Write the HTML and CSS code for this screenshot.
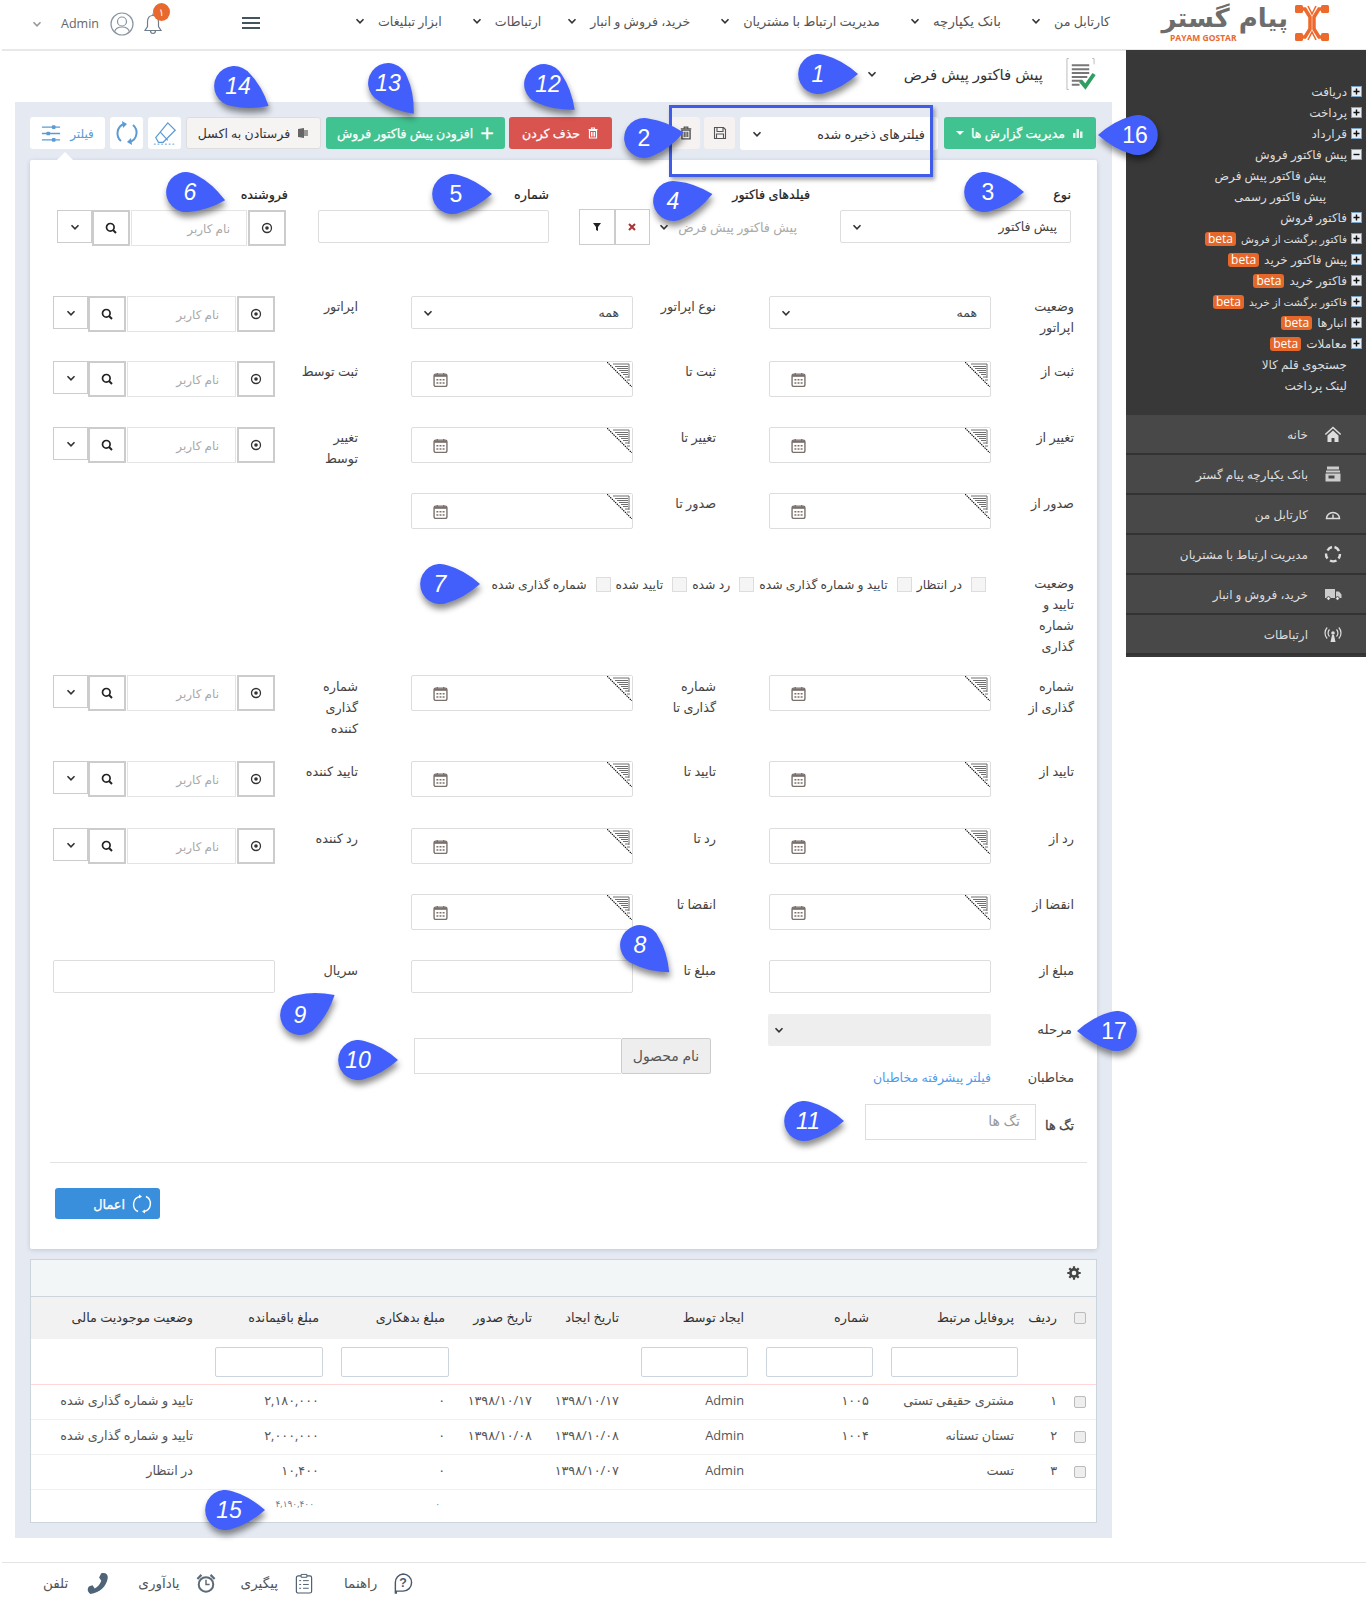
FILE: index.html
```html
<!DOCTYPE html>
<html lang="fa" dir="rtl">
<head>
    <meta charset="UTF-8">
    <meta name="viewport" content="width=device-width, initial-scale=1.0">
    <title>پیش فاکتور پیش فرض</title>
    <link rel="stylesheet" href="styles.css">
</head>
<body>
    <!-- icons used more than once -->
    <svg class="icon-defs" width="0" height="0">
        <defs>
            <symbol id="i-chev" viewBox="0 0 12 12"><path d="M2.5 4.2 6 7.8l3.5-3.6" fill="none" stroke="currentColor" stroke-width="1.6"/></symbol>
            <symbol id="i-target" viewBox="0 0 12 12"><circle cx="6" cy="6" r="4.5" fill="none" stroke="#333" stroke-width="1.3"/><circle cx="6" cy="6" r="1.8" fill="#333"/></symbol>
            <symbol id="i-search" viewBox="0 0 12 12"><circle cx="5.3" cy="5.3" r="3.8" fill="none" stroke="#222" stroke-width="1.7"/><path d="M8 8l3 3" stroke="#222" stroke-width="2"/></symbol>
            <symbol id="i-cal" viewBox="0 0 14 14"><rect x="1" y="2" width="12" height="11.5" rx="1.5" fill="#fff" stroke="#7a706c" stroke-width="1.3"/><path d="M1 2.5h12v2H1z" fill="#7a706c"/><path d="M4 1v2M10 1v2" stroke="#7a706c" stroke-width="1.2"/><path d="M3.2 6.5h1.8V8H3.2zM6.1 6.5h1.8V8H6.1zM9 6.5h1.8V8H9zM3.2 9.5h1.8V11H3.2zM6.1 9.5h1.8V11H6.1zM9 9.5h1.8V11H9z" fill="#7a706c"/></symbol>
            <symbol id="i-corner" viewBox="0 0 25 25"><path d="M0 0h25v25z" fill="#fff"/><path d="M6 2h16v14M8 4.5h13M10 6.5h11M12 8.5h9M14 10.5h7M16 12.5h5M18 15h4M20 18h3" fill="none" stroke="#6f6f6f" stroke-width="1"/><path d="M0 0l25 25" stroke="#111" stroke-width="1.1" stroke-dasharray="1.5 .8"/></symbol>
            <symbol id="i-plus" viewBox="0 0 11 11"><rect x=".5" y=".5" width="10" height="10" fill="#e8eef4" stroke="#7ba3c6"/><path d="M2.5 5.5h6M5.5 2.5v6" stroke="#111" stroke-width="1.4"/></symbol>
            <symbol id="i-minus" viewBox="0 0 11 11"><rect x=".5" y=".5" width="10" height="10" fill="#e8eef4" stroke="#7ba3c6"/><path d="M2.5 5.5h6" stroke="#111" stroke-width="1.4"/></symbol>
            <symbol id="i-trash" viewBox="0 0 12 12"><path d="M1.5 2.5h9M4.5 2.5V1h3v1.5" fill="none" stroke="currentColor" stroke-width="1.1"/><path d="M2.5 3.5h7V11h-7z" fill="none" stroke="currentColor" stroke-width="1.2"/><path d="M4.5 5v4.5M6 5v4.5M7.5 5v4.5" stroke="currentColor"/></symbol>
            <symbol id="i-drop" viewBox="-50 -50 100 100" overflow="visible"><path d="M40 0Q24 14 8 18.4A20 20 0 1 1 8-18.4Q24-14 40 0Z"/></symbol>
        </defs>
    </svg>

    <header class="topbar">
        <div class="logo">
            <svg class="logo-mark" viewBox="0 0 34 36">
                <g fill="#ee6a2c"><rect x="0" y="0" width="8" height="8" rx="1.5"/><rect x="26" y="0" width="8" height="8" rx="1.5"/><rect x="0" y="28" width="8" height="8" rx="1.5"/><rect x="26" y="28" width="8" height="8" rx="1.5"/></g>
                <g fill="none" stroke="#ee6a2c" stroke-width="3.5"><path d="M6 4h4l5 8v12l-5 8H6M28 4h-4l-5 8v12l5 8h4"/></g>
                <g fill="none" stroke="#ee6a2c" stroke-width="1.6"><path d="M13 1l4 8 4-8M13 35l4-8 4 8"/></g>
            </svg>
            <div class="logo-text">
                <span class="logo-fa">پیام گستر</span>
                <span class="logo-en">PAYAM GOSTAR</span>
            </div>
        </div>
        <nav class="topnav">
            <a>کارتابل من<svg class="chev-s"><use href="#i-chev"/></svg></a>
            <a>بانک یکپارچه<svg class="chev-s"><use href="#i-chev"/></svg></a>
            <a>مدیریت ارتباط با مشتریان<svg class="chev-s"><use href="#i-chev"/></svg></a>
            <a>خرید، فروش و انبار<svg class="chev-s"><use href="#i-chev"/></svg></a>
            <a>ارتباطات<svg class="chev-s"><use href="#i-chev"/></svg></a>
            <a>ابزار تبلیغات<svg class="chev-s"><use href="#i-chev"/></svg></a>
        </nav>
        <div class="hamburger"><span></span><span></span><span></span></div>
        <div class="user-area">
            <div class="bell">
                <svg width="22" height="24" viewBox="0 0 22 24"><path d="M11 3.5c-3.7 0-5.5 3-5.5 6.5v4.5L3 18.5h16L16.5 14.5V10c0-3.5-1.8-6.5-5.5-6.5zM11 1.5v2M8.5 18.5c0 2 1 3 2.5 3s2.5-1 2.5-3" fill="none" stroke="#6f7c8a" stroke-width="1.2"/></svg>
                <span class="bell-badge">۱</span>
            </div>
            <svg class="user-pic" viewBox="0 0 24 24"><circle cx="12" cy="12" r="11" fill="none" stroke="#8894a1" stroke-width="1.2"/><circle cx="12" cy="9.5" r="4.5" fill="none" stroke="#8894a1" stroke-width="1.2"/><path d="M4.5 20c1-4 4-5 7.5-5s6.5 1 7.5 5" fill="none" stroke="#8894a1" stroke-width="1.2"/></svg>
            <span class="user-name">Admin</span>
            <svg class="user-chev"><use href="#i-chev"/></svg>
        </div>
    </header>

    <div class="main">
        <aside class="sidebar">
            <ul class="tree">
                <li><svg class="exp"><use href="#i-plus"/></svg>دریافت</li>
                <li><svg class="exp"><use href="#i-plus"/></svg>پرداخت</li>
                <li><svg class="exp"><use href="#i-plus"/></svg>قرارداد</li>
                <li><svg class="exp"><use href="#i-minus"/></svg>پیش فاکتور فروش</li>
                <li class="sub">پیش فاکتور پیش فرض</li>
                <li class="sub">پیش فاکتور رسمی</li>
                <li><svg class="exp"><use href="#i-plus"/></svg>فاکتور فروش</li>
                <li class="tight"><svg class="exp"><use href="#i-plus"/></svg>فاکتور برگشت از فروش<span class="beta">beta</span></li>
                <li><svg class="exp"><use href="#i-plus"/></svg>پیش فاکتور خرید<span class="beta">beta</span></li>
                <li><svg class="exp"><use href="#i-plus"/></svg>فاکتور خرید<span class="beta">beta</span></li>
                <li class="tight"><svg class="exp"><use href="#i-plus"/></svg>فاکتور برگشت از خرید<span class="beta">beta</span></li>
                <li><svg class="exp"><use href="#i-plus"/></svg>انبارها<span class="beta">beta</span></li>
                <li><svg class="exp"><use href="#i-plus"/></svg>معاملات<span class="beta">beta</span></li>
                <li class="plain">جستجوی قلم کالا</li>
                <li class="plain">لینک پرداخت</li>
            </ul>
            <ul class="side-menu">
                <li><svg viewBox="0 0 18 18"><path d="M9 1.5 .8 9l1 1L9 3.5l7.2 6.5 1-1zM3.5 10.5 9 5.5l5.5 5V17h-4v-4h-3v4h-4z" fill="#ddd"/></svg>خانه</li>
                <li><svg viewBox="0 0 18 18"><path d="M3 1.5h12v3H3zM2 5.5h14v2H2z" fill="#ccc"/><path d="M1.5 8.5h15v8h-15z" fill="#ccc"/><path d="M4.5 10.5h6v3h-6z" fill="#484848"/></svg>بانک یکپارچه پیام گستر</li>
                <li><svg viewBox="0 0 18 18"><path d="M2.5 13.5a6.5 6 0 1 1 13 0z" fill="none" stroke="#ddd" stroke-width="1.5"/><path d="M9 13V9.5" stroke="#ddd" stroke-width="1.5"/></svg>کارتابل من</li>
                <li><svg viewBox="0 0 18 18"><g fill="none" stroke="#ddd" stroke-width="2.4"><path d="M3.5 5.5A7 7 0 0 1 8 2"/><path d="M10.5 2a7 7 0 0 1 4.5 4"/><path d="M16 9a7 7 0 0 1-1.5 4.5"/><path d="M12.5 15.5a7 7 0 0 1-6.5 0"/><path d="M3.5 13.5A7 7 0 0 1 2 8.5"/></g></svg>مدیریت ارتباط با مشتریان</li>
                <li><svg viewBox="0 0 18 18"><path d="M1 4h10v9H1zM12 6.5h3l2.5 3v3.500H12z" fill="#ccc"/><circle cx="4.5" cy="13.5" r="1.8" fill="#eee" stroke="#484848"/><circle cx="13.5" cy="13.5" r="1.8" fill="#eee" stroke="#484848"/></svg>خرید، فروش و انبار</li>
                <li><svg viewBox="0 0 18 18"><circle cx="9" cy="8" r="1.8" fill="#ddd"/><path d="M8 10h2l1.5 7h-5z" fill="#ddd"/><g fill="none" stroke="#ddd" stroke-width="1.2"><path d="M5.5 11.5a5 5 0 0 1 0-7M12.5 4.5a5 5 0 0 1 0 7M3.2 13.5a8 8 0 0 1 0-11M14.8 2.5a8 8 0 0 1 0 11"/></g></svg>ارتباطات</li>
            </ul>
        </aside>

        <section class="content">
            <div class="page-title">
                <svg class="doc-icon" viewBox="0 0 32 34"><path d="M4 1H2v32h2M28 1h2v6" fill="none" stroke="#bbb"/><path d="M7 8h18M7 12h18M7 16h18M7 20h16M7 24h10M7 28h8" stroke="#777" stroke-width="2"/><path d="M16 24l5 6 9-13" fill="none" stroke="#2e9e62" stroke-width="4"/></svg>
                <h1>پیش فاکتور پیش فرض</h1>
                <svg class="title-chev"><use href="#i-chev"/></svg>
            </div>

            <div class="panel">
                <div class="toolbar">
                    <button class="btn btn-green btn-report">
                        <svg class="btn-ico" viewBox="0 0 12 12"><path d="M1 6h2.5v5H1zM4.5 2H7v9H4.5zM8 4.5h2.5V11H8z" fill="currentColor" opacity=".85"/></svg>مدیریت گزارش ها
                        <span class="caret"></span>
                    </button>
                    <div class="saved-filters">فیلترهای ذخیره شده<svg class="chev-s"><use href="#i-chev"/></svg></div>
                    <button class="btn-square btn-save"><svg viewBox="0 0 14 14"><path d="M1.5 1.5h9l2 2v9h-11z M4 1.5v4h6v-4 M3.5 12.5V8h7v4.5" fill="none" stroke="#555" stroke-width="1.1"/></svg></button>
                    <button class="btn-square btn-bin"><svg><use href="#i-trash"/></svg></button>
                    <button class="btn btn-red"><svg class="btn-ico"><use href="#i-trash"/></svg>حذف کردن</button>
                    <button class="btn btn-green btn-add"><span class="plus">+</span>افزودن پیش فاکتور فروش</button>
                    <button class="btn btn-excel"><svg class="btn-ico" viewBox="0 0 12 12"><path d="M1 2l6-1v10l-6-1z" fill="#666"/><path d="M7 3h4v6H7z" fill="#999"/></svg>فرستادن به اکسل</button>
                    <button class="tool-tab tool-eraser"><svg viewBox="0 0 28 28"><path d="M4 19 17 3l8 8-13 13H7z M9 13l8 9" fill="none" stroke="#5b9bd5" stroke-width="1.3"/><path d="M2 26h24" stroke="#5b9bd5" stroke-dasharray="2 2"/></svg></button>
                    <button class="tool-tab tool-refresh"><svg viewBox="0 0 26 26"><g fill="none" stroke="#5b9bd5" stroke-width="2"><path d="M7 21A10 10 0 0 1 10 4"/><path d="M19 5a10 10 0 0 1-3 17"/></g><path d="M8 1l5 3-4 4zM18 25l-5-3 4-4z" fill="#5b9bd5"/></svg></button>
                    <button class="tool-tab tool-filter">
                        <svg viewBox="0 0 22 20"><g stroke="#5b9bd5" stroke-width="1.6"><path d="M1 3h20M1 10h20M1 17h20"/></g><g fill="#5b9bd5"><rect x="12" y="1" width="4" height="4" rx="1"/><rect x="6" y="8" width="4" height="4" rx="1"/><rect x="12" y="15" width="4" height="4" rx="1"/></g></svg>
                        فیلتر
                    </button>
                </div>

                <div class="filter-card">
                    <div class="top-fields">
                        <div class="top-field">
                            <label>نوع</label>
                            <div class="select-box"><span>پیش فاکتور</span><svg class="chev-s"><use href="#i-chev"/></svg></div>
                        </div>
                        <div class="top-field">
                            <label>فیلدهای فاکتور</label>
                            <div class="invoice-fields">
                                <span class="muted-value">پیش فاکتور پیش فرض</span>
                                <svg class="chev-s"><use href="#i-chev"/></svg>
                                <div class="field-btns">
                                    <button><svg viewBox="0 0 10 10"><path d="M2 2l6 6M8 2 2 8" stroke="#a33" stroke-width="2"/></svg></button>
                                    <button><svg viewBox="0 0 10 10"><path d="M1 1h8L6 5v4L4 8V5z" fill="#222"/></svg></button>
                                </div>
                            </div>
                        </div>
                        <div class="top-field">
                            <label>شماره</label>
                            <div class="text-box"></div>
                        </div>
                        <div class="top-field">
                            <label>فروشنده</label>
                            <div class="user-pick user-pick-wide">
                                <span class="pick-target"><svg><use href="#i-target"/></svg></span>
                                <span class="pick-name">نام کاربر</span>
                                <span class="pick-search"><svg><use href="#i-search"/></svg></span>
                                <span class="pick-chev"><svg><use href="#i-chev"/></svg></span>
                            </div>
                        </div>
                    </div>

                    <div class="filter-row row-operator">
                        <div class="field"><label>وضعیت<br>اپراتور</label><div class="select-box"><span>همه</span><svg class="chev-s"><use href="#i-chev"/></svg></div></div>
                        <div class="field"><label>نوع اپراتور</label><div class="select-box"><span>همه</span><svg class="chev-s"><use href="#i-chev"/></svg></div></div>
                        <div class="field"><label>اپراتور</label><div class="user-pick"><span class="pick-target"><svg><use href="#i-target"/></svg></span><span class="pick-name">نام کاربر</span><span class="pick-search"><svg><use href="#i-search"/></svg></span><span class="pick-chev"><svg><use href="#i-chev"/></svg></span></div></div>
                    </div>
                    <div class="filter-row">
                        <div class="field"><label>ثبت از</label><div class="date-box"><svg class="corner"><use href="#i-corner"/></svg><svg class="cal"><use href="#i-cal"/></svg></div></div>
                        <div class="field"><label>ثبت تا</label><div class="date-box"><svg class="corner"><use href="#i-corner"/></svg><svg class="cal"><use href="#i-cal"/></svg></div></div>
                        <div class="field"><label>ثبت توسط</label><div class="user-pick"><span class="pick-target"><svg><use href="#i-target"/></svg></span><span class="pick-name">نام کاربر</span><span class="pick-search"><svg><use href="#i-search"/></svg></span><span class="pick-chev"><svg><use href="#i-chev"/></svg></span></div></div>
                    </div>
                    <div class="filter-row">
                        <div class="field"><label>تغییر از</label><div class="date-box"><svg class="corner"><use href="#i-corner"/></svg><svg class="cal"><use href="#i-cal"/></svg></div></div>
                        <div class="field"><label>تغییر تا</label><div class="date-box"><svg class="corner"><use href="#i-corner"/></svg><svg class="cal"><use href="#i-cal"/></svg></div></div>
                        <div class="field"><label>تغییر<br>توسط</label><div class="user-pick"><span class="pick-target"><svg><use href="#i-target"/></svg></span><span class="pick-name">نام کاربر</span><span class="pick-search"><svg><use href="#i-search"/></svg></span><span class="pick-chev"><svg><use href="#i-chev"/></svg></span></div></div>
                    </div>
                    <div class="filter-row row-issue">
                        <div class="field"><label>صدور از</label><div class="date-box"><svg class="corner"><use href="#i-corner"/></svg><svg class="cal"><use href="#i-cal"/></svg></div></div>
                        <div class="field"><label>صدور تا</label><div class="date-box"><svg class="corner"><use href="#i-corner"/></svg><svg class="cal"><use href="#i-cal"/></svg></div></div>
                    </div>
                    <div class="status-row">
                        <label>وضعیت<br>تایید و<br>شماره<br>گذاری</label>
                        <div class="status-checks">
                            <span class="check"><i></i>در انتظار</span>
                            <span class="check"><i></i>تایید و شماره گذاری شده</span>
                            <span class="check"><i></i>رد شده</span>
                            <span class="check"><i></i>تایید شده</span>
                            <span class="check"><i></i>شماره گذاری شده</span>
                        </div>
                    </div>
                    <div class="filter-row row-number">
                        <div class="field"><label>شماره<br>گذاری از</label><div class="date-box"><svg class="corner"><use href="#i-corner"/></svg><svg class="cal"><use href="#i-cal"/></svg></div></div>
                        <div class="field"><label>شماره<br>گذاری تا</label><div class="date-box"><svg class="corner"><use href="#i-corner"/></svg><svg class="cal"><use href="#i-cal"/></svg></div></div>
                        <div class="field"><label>شماره<br>گذاری<br>کننده</label><div class="user-pick"><span class="pick-target"><svg><use href="#i-target"/></svg></span><span class="pick-name">نام کاربر</span><span class="pick-search"><svg><use href="#i-search"/></svg></span><span class="pick-chev"><svg><use href="#i-chev"/></svg></span></div></div>
                    </div>
                    <div class="filter-row row-approve">
                        <div class="field"><label>تایید از</label><div class="date-box"><svg class="corner"><use href="#i-corner"/></svg><svg class="cal"><use href="#i-cal"/></svg></div></div>
                        <div class="field"><label>تایید تا</label><div class="date-box"><svg class="corner"><use href="#i-corner"/></svg><svg class="cal"><use href="#i-cal"/></svg></div></div>
                        <div class="field"><label>تایید کننده</label><div class="user-pick"><span class="pick-target"><svg><use href="#i-target"/></svg></span><span class="pick-name">نام کاربر</span><span class="pick-search"><svg><use href="#i-search"/></svg></span><span class="pick-chev"><svg><use href="#i-chev"/></svg></span></div></div>
                    </div>
                    <div class="filter-row">
                        <div class="field"><label>رد از</label><div class="date-box"><svg class="corner"><use href="#i-corner"/></svg><svg class="cal"><use href="#i-cal"/></svg></div></div>
                        <div class="field"><label>رد تا</label><div class="date-box"><svg class="corner"><use href="#i-corner"/></svg><svg class="cal"><use href="#i-cal"/></svg></div></div>
                        <div class="field"><label>رد کننده</label><div class="user-pick"><span class="pick-target"><svg><use href="#i-target"/></svg></span><span class="pick-name">نام کاربر</span><span class="pick-search"><svg><use href="#i-search"/></svg></span><span class="pick-chev"><svg><use href="#i-chev"/></svg></span></div></div>
                    </div>
                    <div class="filter-row">
                        <div class="field"><label>انقضا از</label><div class="date-box"><svg class="corner"><use href="#i-corner"/></svg><svg class="cal"><use href="#i-cal"/></svg></div></div>
                        <div class="field"><label>انقضا تا</label><div class="date-box"><svg class="corner"><use href="#i-corner"/></svg><svg class="cal"><use href="#i-cal"/></svg></div></div>
                    </div>
                    <div class="filter-row row-amount">
                        <div class="field"><label>مبلغ از</label><div class="text-box"></div></div>
                        <div class="field"><label>مبلغ تا</label><div class="text-box"></div></div>
                        <div class="field"><label>سریال</label><div class="text-box"></div></div>
                    </div>

                    <div class="filter-split">
                        <div class="split-main">
                            <div class="field field-stage"><label>مرحله</label><div class="stage-box"><svg class="chev-s"><use href="#i-chev"/></svg></div></div>
                            <div class="field field-audience"><label>مخاطبان</label><a class="link">فیلتر پیشرفته مخاطبان</a></div>
                            <div class="field-tags"><label>تگ ها</label><div class="tags-box">تگ ها</div></div>
                        </div>
                        <div class="product-group"><span class="addon">نام محصول</span><div class="product-input"></div></div>
                    </div>

                    <hr class="divider">
                    <div class="apply-row">
                        <button class="btn-apply">
                            <svg viewBox="0 0 20 20"><g fill="none" stroke="#fff" stroke-width="1.4"><path d="M6 17.5A8 8 0 0 1 8 2.5"/><path d="M14 2.5A8 8 0 0 1 12 17.5"/></g><path d="M7 .5l3 2-3 2zM13 19.5l-3-2 3-2z" fill="#fff"/></svg>
                            اعمال
                        </button>
                    </div>
                </div>

                <div class="grid-box">
                    <div class="grid-tools">
                        <svg viewBox="0 0 14 14"><circle cx="7" cy="7" r="3.6" fill="none" stroke="#444" stroke-width="2.6"/><path d="M7 .3v2.5M7 11.2v2.5M.3 7h2.5M11.2 7h2.5M2.3 2.3l1.8 1.8M9.9 9.9l1.8 1.8M2.3 11.7l1.8-1.8M9.9 4.1l1.8-1.8" stroke="#444" stroke-width="2.2"/></svg>
                    </div>
                    <table class="grid">
                        <colgroup>
                            <col class="c-check"><col class="c-row"><col class="c-profile"><col class="c-num"><col class="c-by"><col class="c-date"><col class="c-date"><col class="c-money"><col class="c-money"><col class="c-status">
                        </colgroup>
                        <thead>
                            <tr class="head">
                                <th><i class="box"></i></th><th>ردیف</th><th>پروفایل مرتبط</th><th>شماره</th><th>ایجاد توسط</th><th>تاریخ ایجاد</th><th>تاریخ صدور</th><th>مبلغ بدهکاری</th><th>مبلغ باقیمانده</th><th>وضعیت موجودیت مالی</th>
                            </tr>
                            <tr class="filters">
                                <td></td><td></td><td><div class="col-input"></div></td><td><div class="col-input"></div></td><td><div class="col-input"></div></td><td></td><td></td><td><div class="col-input"></div></td><td><div class="col-input"></div></td><td></td>
                            </tr>
                        </thead>
                        <tbody>
                            <tr><td><i class="box"></i></td><td>۱</td><td>مشتری حقیقی تستی</td><td>۱۰۰۵</td><td>Admin</td><td>۱۳۹۸/۱۰/۱۷</td><td>۱۳۹۸/۱۰/۱۷</td><td>۰</td><td>۲,۱۸۰,۰۰۰</td><td>تایید و شماره گذاری شده</td></tr>
                            <tr><td><i class="box"></i></td><td>۲</td><td>تستان تستانه</td><td>۱۰۰۴</td><td>Admin</td><td>۱۳۹۸/۱۰/۰۸</td><td>۱۳۹۸/۱۰/۰۸</td><td>۰</td><td>۲,۰۰۰,۰۰۰</td><td>تایید و شماره گذاری شده</td></tr>
                            <tr><td><i class="box"></i></td><td>۳</td><td>تست</td><td></td><td>Admin</td><td>۱۳۹۸/۱۰/۰۷</td><td></td><td>۰</td><td>۱۰,۴۰۰</td><td>در انتظار</td></tr>
                            <tr class="total"><td></td><td></td><td></td><td></td><td></td><td></td><td></td><td>۰</td><td>۴,۱۹۰,۴۰۰</td><td></td></tr>
                        </tbody>
                    </table>
                </div>
            </div>
        </section>
    </div>

    <footer class="bottombar">
        <a><svg viewBox="0 0 20 22"><path d="M10 1a9 9 0 0 1 0 18H3v2H2V10a9 9 0 0 1 8-9z" fill="none" stroke="#4a5a6c" stroke-width="1.5"/><text class="help-q" x="10" y="15" text-anchor="middle">?</text></svg>راهنما</a>
        <a><svg viewBox="0 0 18 22"><rect x="1" y="3" width="16" height="18" rx="2" fill="none" stroke="#4a5a6c" stroke-width="1.2"/><path d="M6 1.5h6v3H6z" fill="#fff" stroke="#4a5a6c"/><path d="M4 8h2M8 8h6M4 12h2M8 12h6M4 16h2M8 16h6" stroke="#4a5a6c"/></svg>پیگیری</a>
        <a class="foot-alarm"><svg viewBox="0 0 22 22"><circle cx="11" cy="12" r="8" fill="none" stroke="#5d6b79" stroke-width="2.2"/><path d="M11 7v5h4" fill="none" stroke="#5d6b79" stroke-width="1.6"/><path d="M1.5 6 6 1.5M20.5 6 16 1.5" stroke="#5d6b79" stroke-width="2.4"/></svg>یادآوری</a>
        <a class="foot-phone"><svg viewBox="0 0 22 22"><path d="M4 21c-3-2-3-5-1-7l3-1 2 3c3-1.5 5-4 6-7l-2-3 2-4c4-1 6 1 6 4-1 8-7 14-16 15z" fill="#4f6478"/></svg>تلفن</a>
    </footer>

    <!-- numbered callouts laid over the screenshot -->
    <div class="highlight-box"></div>
    <div class="callout at-1 slant"><svg><use href="#i-drop"/></svg><span>1</span></div>
    <div class="callout at-2"><svg><g transform="rotate(-8 50 50)"><use href="#i-drop" width="100" height="100"/></g></svg><span>2</span></div>
    <div class="callout at-3 nudge"><svg><use href="#i-drop"/></svg><span>3</span></div>
    <div class="callout at-4 slant"><svg><g transform="rotate(-10 50 50)"><use href="#i-drop" width="100" height="100"/></g></svg><span>4</span></div>
    <div class="callout at-5 nudge"><svg><use href="#i-drop"/></svg><span>5</span></div>
    <div class="callout at-6 slant nudge"><svg><g transform="rotate(12 50 50)"><use href="#i-drop" width="100" height="100"/></g></svg><span>6</span></div>
    <div class="callout at-7 slant"><svg><use href="#i-drop"/></svg><span>7</span></div>
    <div class="callout at-8 slant"><svg><g transform="rotate(43 50 50)"><use href="#i-drop" width="100" height="100"/></g></svg><span>8</span></div>
    <div class="callout at-9 slant"><svg><g transform="rotate(-30 50 50)"><use href="#i-drop" width="100" height="100"/></g></svg><span>9</span></div>
    <div class="callout at-10 slant"><svg><use href="#i-drop"/></svg><span>10</span></div>
    <div class="callout at-11 slant nudge"><svg><use href="#i-drop"/></svg><span>11</span></div>
    <div class="callout at-12 slant nudge"><svg><g transform="rotate(40 50 50)"><use href="#i-drop" width="100" height="100"/></g></svg><span>12</span></div>
    <div class="callout at-13 slant"><svg><g transform="rotate(50 50 50)"><use href="#i-drop" width="100" height="100"/></g></svg><span>13</span></div>
    <div class="callout at-14 slant nudge"><svg><g transform="rotate(30 50 50)"><use href="#i-drop" width="100" height="100"/></g></svg><span>14</span></div>
    <div class="callout at-15 slant nudge"><svg><use href="#i-drop"/></svg><span>15</span></div>
    <div class="callout at-16 nudge-back"><svg><g transform="rotate(180 50 50)"><use href="#i-drop" width="100" height="100"/></g></svg><span>16</span></div>
    <div class="callout at-17 nudge-back"><svg><g transform="rotate(180 50 50)"><use href="#i-drop" width="100" height="100"/></g></svg><span>17</span></div>
</body>
</html>
```

FILE: styles.css
```css
* {
    box-sizing: border-box;
}
body {
    margin: 0;
    position: relative;
    width: 1366px;
    height: 1603px;
    overflow: hidden;
    background: #fff;
    color: #444;
    font-family: "Open Sans", "DejaVu Sans", sans-serif;
    font-size: 12.8px;
}
button {
    font-family: inherit;
    font-size: inherit;
    cursor: pointer;
}
.icon-defs {
    position: absolute;
}

/* top bar */
.topbar {
    display: flex;
    align-items: center;
    height: 51px;
    margin-left: 2px;
    padding-right: 37px;
    border-bottom: 2px solid #e8e8e8;
}
.logo {
    display: flex;
    align-items: flex-start;
    gap: 7px;
    width: 219px;
    height: 42px;
    margin-top: 3px;
}
.logo-mark {
    width: 34px;
    height: 36px;
    flex: none;
}
.logo-text {
    display: flex;
    flex-direction: column;
    align-items: flex-start;
    width: 125px;
}
.logo-fa {
    font-family: "DejaVu Sans", sans-serif;
    font-size: 26px;
    font-weight: bold;
    line-height: 27px;
    color: #6d6d6d;
    white-space: nowrap;
}
.logo-en {
    align-self: flex-end;
    margin: 1px 0 0 7px;
    font-family: "Open Sans", sans-serif;
    font-size: 8.5px;
    font-weight: bold;
    line-height: 10px;
    color: #e8692e;
    direction: ltr;
}
.topnav {
    display: flex;
    color: #555;
    font-size: 12.6px;
    margin-top: -7px;
}
.topnav a {
    display: flex;
    align-items: center;
    gap: 12px;
    margin-left: 29px;
    white-space: nowrap;
}
.topnav a:nth-child(2) {
    font-size: 13.4px;
}
.topnav a:nth-child(3) {
    font-size: 12.8px;
}
.topnav a:nth-child(4) {
    margin-left: 25px;
}
.chev-s {
    width: 12px;
    height: 12px;
    color: #333;
    flex: none;
}
.hamburger {
    width: 18px;
    margin-right: auto;
    margin-left: 78px;
    margin-top: -3px;
}
.hamburger span {
    display: block;
    height: 2px;
    margin: 3px 0;
    background: #44545f;
}
.user-area {
    display: flex;
    align-items: center;
    width: 135px;
    margin-left: 27px;
    margin-top: -2px;
    color: #556;
}
.bell {
    position: relative;
    width: 22px;
    height: 24px;
}
.bell-badge {
    position: absolute;
    top: -9px;
    left: 11px;
    width: 17px;
    height: 18px;
    border-radius: 50%;
    background: #e8692e;
    color: #fff;
    font-size: 10px;
    line-height: 18px;
    text-align: center;
}
.user-pic {
    width: 24px;
    height: 24px;
    margin-right: 8px;
}
.user-name {
    margin-right: 11px;
    font-size: 12.5px;
    color: #666;
}
.user-chev {
    width: 12px;
    height: 12px;
    margin-right: 18px;
    color: #999;
}

/* page frame */
.main {
    display: flex;
    height: 1511px;
}
.sidebar {
    width: 240px;
    height: 607px;
    margin-top: -1px;
    background: #383838;
    flex: none;
    color: #ddd;
    font-size: 12px;
}
.tree {
    height: 365px;
    margin: 0;
    padding: 31px 4px 0 0;
    list-style: none;
}
.tree li {
    display: flex;
    align-items: center;
    gap: 4px;
    height: 21px;
    white-space: nowrap;
}
.tree .tight {
    font-size: 10.6px;
}
.exp {
    width: 11px;
    height: 11px;
    flex: none;
}
.tree .sub {
    padding-right: 36px;
}
.tree .plain {
    padding-right: 15px;
}
.beta {
    margin-right: 1px;
    padding: 0 3px;
    border-radius: 3px;
    background: #e5682a;
    color: #fff;
    font-size: 12px;
    line-height: 14px;
}
.side-menu {
    margin: 0;
    padding: 0;
    list-style: none;
    background: #484848;
}
.side-menu li {
    display: flex;
    align-items: center;
    gap: 16px;
    height: 40px;
    padding-right: 24px;
    border-bottom: 2px solid #333;
    white-space: nowrap;
}
.side-menu svg {
    width: 18px;
    height: 18px;
    flex: none;
}
.content {
    flex: 1;
    padding: 0 14px 0 15px;
}
.page-title {
    display: flex;
    align-items: center;
    height: 51px;
    padding: 0 16px 5px 0;
}
.doc-icon {
    width: 31px;
    height: 34px;
    flex: none;
}
.page-title h1 {
    margin: 0 22px 0 0;
    font-size: 15px;
    font-weight: normal;
    color: #333;
}
.title-chev {
    width: 12px;
    height: 12px;
    margin-right: 26px;
    color: #333;
}
.panel {
    height: 1436px;
    padding: 15px 15px 16px 15px;
    background: #e4e9f2;
}

/* toolbar */
.toolbar {
    position: relative;
    display: flex;
    height: 32px;
    padding-right: 1px;
}
.btn {
    display: flex;
    align-items: center;
    justify-content: center;
    gap: 7px;
    height: 32px;
    border: 0;
    border-radius: 3px;
    color: #fff;
    font-size: 12.5px;
    -webkit-text-stroke: 0.25px #fff;
    white-space: nowrap;
}
.btn-ico {
    width: 12px;
    height: 12px;
    flex: none;
}
.btn-green {
    background: #41c391;
}
.btn-red {
    width: 103px;
    margin-right: 59px;
    background: #d9534f;
}
.btn-report {
    width: 152px;
}
.btn-add {
    width: 179px;
    margin-right: 4px;
}
.plus {
    font-size: 24px;
    font-weight: normal;
    line-height: 20px;
}
.caret {
    border-top: 4px solid #fff;
    border-right: 4px solid transparent;
    border-left: 4px solid transparent;
}
.btn-excel {
    width: 135px;
    margin-right: 5px;
    border: 1px solid #ddd;
    background: #f6f3f3;
    color: #333;
    -webkit-text-stroke: 0;
}
.saved-filters {
    display: flex;
    align-items: center;
    justify-content: space-between;
    width: 198px;
    height: 33px;
    margin-right: 6px;
    padding: 0 13px 0 11px;
    border-radius: 3px;
    background: #fff;
    color: #333;
}
.btn-square {
    width: 31px;
    height: 32px;
    padding: 0;
    border: 0;
    border-radius: 3px;
    background: #f5f2f1;
    color: #555;
}
.btn-square svg {
    display: block;
    width: 14px;
    height: 14px;
    margin: auto;
}
.btn-save {
    margin-right: 5px;
}
.btn-bin {
    width: 29px;
    margin-right: 4px;
}
.tool-tab {
    display: flex;
    align-items: center;
    justify-content: center;
    height: 32px;
    margin-right: 5px;
    padding: 0;
    border: 0;
    border-radius: 3px;
    background: #fff;
    color: #5b9bd5;
}
.tool-eraser {
    width: 33px;
}
.tool-eraser svg,
.tool-refresh svg {
    width: 26px;
    height: 26px;
}
.tool-refresh {
    width: 33px;
}
.tool-filter {
    position: relative;
    flex-direction: row-reverse;
    gap: 9px;
    width: 75px;
    font-size: 12px;
}
.tool-filter svg {
    width: 20px;
    height: 19px;
}
.tool-filter::after {
    content: "";
    position: absolute;
    bottom: -11px;
    left: 27px;
    border-right: 8px solid transparent;
    border-bottom: 8px solid #fff;
    border-left: 8px solid transparent;
}

/* filter card */
.filter-card {
    height: 1089px;
    margin-top: 11px;
    padding: 24px 10px 29px 20px;
    background: #fff;
    border-radius: 2px;
    box-shadow: 0 1px 4px rgba(90, 100, 130, 0.25);
}
.filter-card label {
    white-space: nowrap;
    line-height: 21px;
    color: #444;
}
.top-fields {
    display: grid;
    grid-template-columns: repeat(4, 231px);
    column-gap: 30px;
    height: 59px;
    margin: 0 16px 53px 0;
}
.top-field label {
    display: block;
    height: 26px;
    color: #222;
    -webkit-text-stroke: 0.2px #222;
}
.select-box {
    display: flex;
    align-items: center;
    justify-content: space-between;
    height: 33px;
    padding: 0 13px 0 10px;
    border: 1px solid #ddd;
    border-radius: 2px;
    color: #444;
    font-size: 12.5px;
}
.text-box {
    height: 33px;
    border: 1px solid #ddd;
    border-radius: 2px;
}
.invoice-fields {
    display: flex;
    align-items: center;
    height: 33px;
    padding-right: 13px;
}
.muted-value {
    color: #aaa;
    white-space: nowrap;
}
.invoice-fields .chev-s {
    margin-right: auto;
    margin-left: 8px;
}
.field-btns {
    display: flex;
    width: 71px;
    height: 36px;
}
.field-btns button {
    flex: 1;
    padding: 0;
    border: 1px solid #ccc;
    background: #fff;
}
.field-btns svg {
    display: block;
    width: 10px;
    height: 10px;
    margin: auto;
}
.user-pick {
    display: flex;
    width: 222px;
    height: 36px;
}
.user-pick svg {
    display: block;
    width: 12px;
    height: 12px;
    margin: auto;
}
.user-pick span {
    display: flex;
    align-items: center;
}
.pick-target,
.pick-search {
    width: 38px;
    border: 2px solid #ccc;
    flex: none;
}
.pick-name {
    flex: 1;
    padding-right: 16px;
    margin: 0 1px;
    border: 1px solid #e4e4e4;
    color: #aaa;
    font-size: 12px;
}
.pick-chev {
    width: 35px;
    height: 33px;
    border: 1px solid #ccc;
    color: #333;
    flex: none;
}
.user-pick-wide {
    width: 229px;
    margin-right: 2px;
}
.filter-row {
    display: grid;
    grid-template-columns: repeat(3, 305px);
    column-gap: 53px;
    height: 36px;
    margin: 0 13px 30px 0;
}
.row-operator {
    margin-bottom: 29px;
}
.row-issue {
    margin-bottom: 44px;
}
.row-number {
    margin-bottom: 50px;
}
.row-number label {
    margin-top: 1px;
}
.row-approve {
    margin-bottom: 31px;
}
.row-amount {
    margin-bottom: 18px;
}
.field {
    display: flex;
    height: 36px;
}
.field label {
    display: block;
    width: 83px;
    flex: none;
}
.field > .select-box,
.field > .text-box,
.field > .date-box {
    flex: 1;
}
.date-box {
    position: relative;
    height: 36px;
    border: 1px solid #ddd;
    border-radius: 2px;
}
.corner {
    position: absolute;
    top: 0;
    right: 0;
    width: 25px;
    height: 25px;
}
.cal {
    position: absolute;
    top: 10px;
    left: 21px;
    width: 15px;
    height: 15px;
}
.status-row {
    display: flex;
    height: 72px;
    margin: 0 13px 30px 0;
}
.status-row label {
    width: 83px;
    flex: none;
}
.status-checks {
    display: flex;
    gap: 5px;
    padding-right: 5px;
    height: 20px;
    align-items: center;
    margin-top: 1px;
}
.check {
    display: flex;
    align-items: center;
    gap: 9px;
    white-space: nowrap;
    color: #444;
    font-size: 12.4px;
}
.check i {
    width: 15px;
    height: 15px;
    border: 1px solid #ddd;
    background: #f5f5f5;
}
.filter-split {
    display: flex;
    margin-right: 13px;
}
.split-main {
    width: 306px;
}
.field-stage {
    height: 32px;
}
.field-stage label {
    padding-right: 2px;
    font-size: 13.5px;
    line-height: 31px;
}
.stage-box {
    flex: 1;
    display: flex;
    align-items: center;
    justify-content: flex-end;
    padding-left: 5px;
    height: 32px;
    background: #eee;
    border-radius: 2px;
}
.field-audience {
    height: 21px;
    margin-top: 21px;
}
.link {
    color: #4f9bef;
    font-size: 12.5px;
    line-height: 21px;
}
.field-tags {
    display: flex;
    height: 36px;
    margin-top: 16px;
}
.field-tags label {
    width: 38px;
    line-height: 42px;
    -webkit-text-stroke: 0.3px #444;
    flex: none;
}
.tags-box {
    width: 171px;
    height: 36px;
    padding-right: 15px;
    border: 1px solid #ddd;
    color: #999;
    font-size: 14px;
    line-height: 32px;
}
.product-group {
    display: flex;
    width: 297px;
    height: 36px;
    margin: 24px 57px 0 0;
}
.addon {
    width: 90px;
    border: 1px solid #ccc;
    border-radius: 2px;
    background: #eee;
    font-size: 14px;
    text-align: center;
    line-height: 34px;
    color: #555;
    flex: none;
}
.product-input {
    flex: 1;
    border: 1px solid #ddd;
    border-right: 0;
}
.divider {
    height: 1px;
    margin: 22px 0 25px;
    border: 0;
    background: #e3e3e3;
}
.apply-row {
    display: flex;
    padding-left: 5px;
    justify-content: flex-end;
}
.btn-apply {
    display: flex;
    align-items: center;
    gap: 7px;
    width: 105px;
    height: 31px;
    padding: 0 8px;
    border: 0;
    border-radius: 3px;
    background: #3a8fdc;
    color: #fff;
    -webkit-text-stroke: 0.25px #fff;
}
.btn-apply svg {
    width: 20px;
    height: 20px;
}

/* result grid */
.grid-box {
    height: 264px;
    margin-top: 10px;
    border: 1px solid #ccd5dc;
    background: #fff;
}
.grid-tools {
    display: flex;
    align-items: center;
    height: 37px;
    padding: 0 15px 10px;
    background: #f3f6f7;
    border-bottom: 1px solid #ccd5dc;
}
.grid-tools svg {
    width: 14px;
    height: 14px;
}
.grid {
    width: 100%;
    table-layout: fixed;
    border-collapse: collapse;
}
.c-check { width: 31px; }
.c-row { width: 40px; }
.c-profile { width: 145px; }
.c-num { width: 125px; }
.c-by { width: 125px; }
.c-date { width: 87px; }
.c-money { width: 126px; }
.grid th,
.grid td {
    padding: 0 11px 4px;
    text-align: right;
    white-space: nowrap;
    font-weight: normal;
}
.grid th:nth-child(2),
.grid td:nth-child(2) {
    padding-right: 8px;
}
.grid .head {
    height: 42px;
    background: #f2f2f2;
    color: #333;
}
.grid .head th {
    padding-bottom: 3px;
}
.grid .filters {
    height: 45px;
    border-bottom: 1px solid #ffd7d7;
}
.grid .filters td {
    padding: 2px 7px 0 11px;
}
.col-input {
    height: 30px;
    border: 1px solid #ccd5dc;
    border-radius: 2px;
}
.grid tbody tr {
    height: 35px;
    border-bottom: 1px solid #eef0f2;
    color: #555;
}
.grid tbody .total {
    height: 33px;
    border: 0;
    font-size: 9px;
    color: #6b7f8f;
}
.grid .total td {
    padding-right: 16px;
}
.grid th:first-child,
.grid td:first-child {
    padding: 0 10px 0 0;
}
.box {
    display: block;
    width: 12px;
    height: 12px;
    border: 1px solid #bbb;
    border-radius: 2px;
    background: #eee;
}

/* bottom bar */
.bottombar {
    display: flex;
    justify-content: flex-end;
    align-items: center;
    gap: 30px;
    height: 41px;
    margin-left: 2px;
    padding-left: 41px;
    border-top: 1px solid #e4e4e4;
    color: #555;
    font-size: 13.5px;
}
.bottombar a {
    display: flex;
    align-items: center;
    gap: 16px;
}
.bottombar svg {
    width: 20px;
    height: 21px;
}
.foot-alarm {
    margin-right: -5px;
}
.foot-phone {
    margin-right: -2px;
}
.bottombar .foot-phone {
    gap: 18px;
}
.bottombar .foot-phone svg {
    width: 24px;
    height: 24px;
}
.help-q {
    font-family: "Liberation Sans", sans-serif;
    font-size: 13px;
    font-weight: bold;
    fill: #4a5a6c;
}

/* annotation overlay */
.highlight-box {
    position: absolute;
    top: 105px;
    left: 669px;
    width: 264px;
    height: 72px;
    border: 3px solid #3f5be8;
    box-shadow: 2px 3px 4px rgba(0, 0, 0, 0.35);
    pointer-events: none;
}
.callout {
    position: absolute;
    width: 100px;
    height: 100px;
    pointer-events: none;
}
.callout svg {
    position: absolute;
    top: 0;
    left: 0;
    width: 100px;
    height: 100px;
    overflow: visible;
    fill: #425ffb;
    filter: drop-shadow(1px 5px 3px rgba(0, 0, 0, 0.45));
}
.callout span {
    position: absolute;
    top: 0;
    left: 0;
    width: 100px;
    font-family: "Liberation Sans", Arial, sans-serif;
    font-size: 23px;
    line-height: 100px;
    text-align: center;
    color: #fff;
    direction: ltr;
}
.callout.slant span {
    font-style: italic;
}
.callout.nudge span {
    left: 4px;
}
.callout.nudge-back span {
    left: -3px;
}
.at-1 { left: 768px; top: 24px; }
.at-2 { left: 594px; top: 88px; }
.at-3 { left: 934px; top: 142px; }
.at-4 { left: 623px; top: 151px; }
.at-5 { left: 402px; top: 144px; }
.at-6 { left: 136px; top: 142px; }
.at-7 { left: 390px; top: 534px; }
.at-8 { left: 590px; top: 895px; }
.at-9 { left: 250px; top: 965px; }
.at-10 { left: 308px; top: 1010px; }
.at-11 { left: 754px; top: 1071px; }
.at-12 { left: 494px; top: 34px; }
.at-13 { left: 338px; top: 33px; }
.at-14 { left: 184px; top: 36px; }
.at-15 { left: 175px; top: 1460px; }
.at-16 { left: 1088px; top: 85px; }
.at-17 { left: 1067px; top: 981px; }
```
